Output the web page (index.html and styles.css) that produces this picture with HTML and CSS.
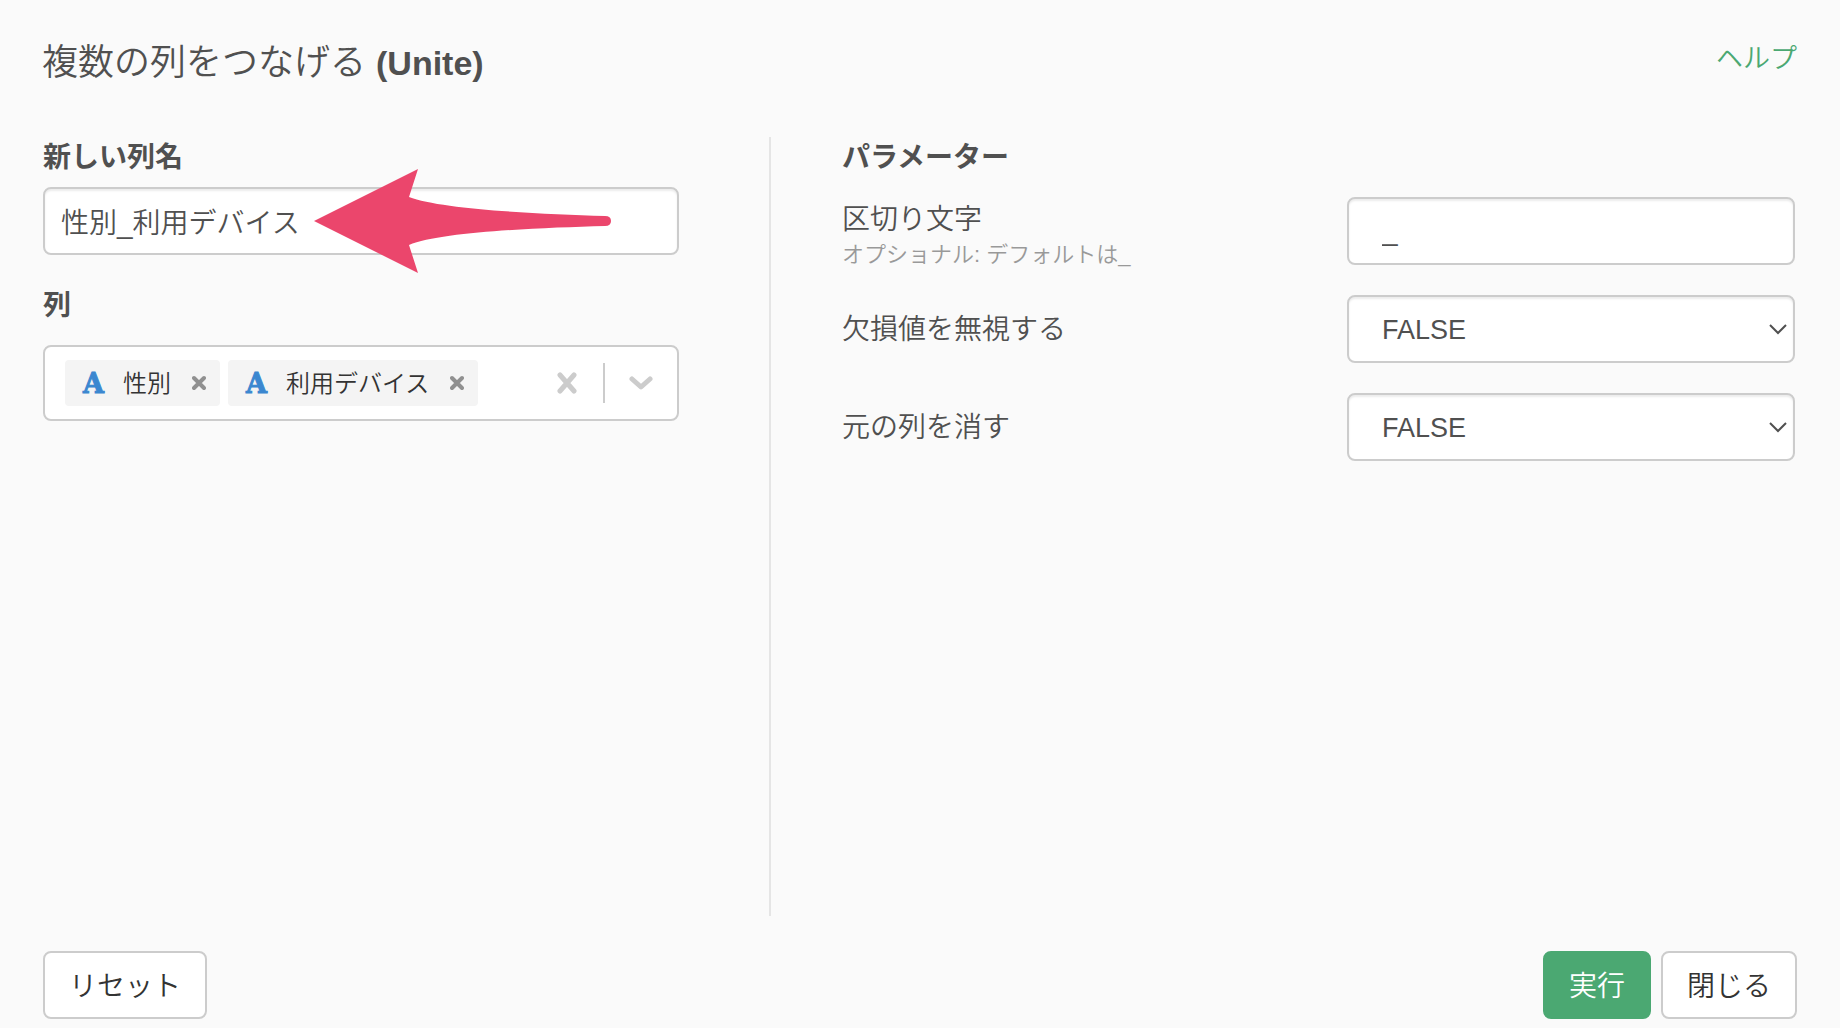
FILE: index.html
```html
<!DOCTYPE html>
<html lang="ja">
<head>
  <meta charset="UTF-8">
  <meta name="viewport" content="width=device-width, initial-scale=1.0">
  <title>複数の列をつなげる (Unite)</title>
  <link rel="stylesheet" href="styles.css">
</head>
<body>
  <form class="dialog">
    <header class="header">
      <h1 class="title">複数の列をつなげる <span class="title-en">(Unite)</span></h1>
      <a class="help" href="#help">ヘルプ</a>
    </header>
    <main class="content">
      <section class="columns-pane">
        <label class="heading" for="newName">新しい列名</label>
        <div class="name-field">
          <input class="control name-input" type="text" id="newName" value="性別_利用デバイス">
          <svg class="arrow" width="298" height="106" viewBox="0 0 298 106" aria-hidden="true">
            <path d="M0 53 L104 1 L95 29 C126 41 220 46 291 48 Q297 48 297 53 Q297 58 291 58 C220 60 126 64 95 77 L104 105 Z"/>
          </svg>
        </div>
        <h2 class="heading" id="columnsLabel">列</h2>
        <div class="multi-select" role="group" aria-labelledby="columnsLabel">
          <span class="tag">
            <span class="type-icon">A</span>
            <span class="tag-name">性別</span>
            <button class="icon-button tag-remove" type="button" aria-label="性別を外す">
              <svg width="14" height="16" viewBox="0 0 14 16"><path d="M2 3 L12 13 M12 3 L2 13"/></svg>
            </button>
          </span>
          <span class="tag">
            <span class="type-icon">A</span>
            <span class="tag-name">利用デバイス</span>
            <button class="icon-button tag-remove" type="button" aria-label="利用デバイスを外す">
              <svg width="14" height="16" viewBox="0 0 14 16"><path d="M2 3 L12 13 M12 3 L2 13"/></svg>
            </button>
          </span>
          <button class="icon-button clear" type="button" aria-label="すべて外す">
            <svg width="20" height="22" viewBox="0 0 20 22"><path d="M3 3 L17 19 M17 3 L3 19"/></svg>
          </button>
          <span class="separator"></span>
          <button class="icon-button open" type="button" aria-label="列を選ぶ">
            <svg width="24" height="14" viewBox="0 0 24 14"><path d="M3 3 L12 11 L21 3"/></svg>
          </button>
        </div>
      </section>
      <section class="params-pane">
        <h2 class="heading">パラメーター</h2>
        <div class="param">
          <label class="param-label" for="separator">区切り文字
            <small class="hint">オプショナル: デフォルトは_</small>
          </label>
          <div class="param-field">
            <input class="control" type="text" id="separator" value="_">
          </div>
        </div>
        <div class="param">
          <label class="param-label single" for="ignoreNa">欠損値を無視する</label>
          <div class="param-field">
            <select class="control select" id="ignoreNa">
              <option>FALSE</option>
              <option>TRUE</option>
            </select>
            <svg class="caret" width="18" height="11" viewBox="0 0 18 11"><path d="M1 1 L9 9 L17 1"/></svg>
          </div>
        </div>
        <div class="param">
          <label class="param-label single" for="removeCols">元の列を消す</label>
          <div class="param-field">
            <select class="control select" id="removeCols">
              <option>FALSE</option>
              <option>TRUE</option>
            </select>
            <svg class="caret" width="18" height="11" viewBox="0 0 18 11"><path d="M1 1 L9 9 L17 1"/></svg>
          </div>
        </div>
      </section>
    </main>
    <footer class="footer">
      <button class="button" type="reset">リセット</button>
      <div class="actions">
        <button class="button primary" type="button">実行</button>
        <button class="button" type="button">閉じる</button>
      </div>
    </footer>
  </form>
</body>
</html>
```

FILE: styles.css
```css
* {
  box-sizing: border-box;
}
body {
  margin: 0;
  background: #fafafa;
  color: #505050;
  font-family: "Liberation Sans", "Noto Sans CJK JP", sans-serif;
  font-size: 28px;
  font-weight: 350;
}
input, select, button {
  font: inherit;
  color: inherit;
}
.dialog {
  display: flex;
  flex-direction: column;
  min-height: 100vh;
  padding: 36px 43px 9px 42px;
}
.header {
  display: flex;
  justify-content: space-between;
  height: 101px;
}
.title {
  margin: 0;
  font-size: 36px;
  font-weight: 350;
  line-height: 53px;
}
.title-en {
  font-size: 34px;
  font-weight: bold;
}
.help {
  color: #4ba872;
  font-size: 27px;
  line-height: 46px;
  text-decoration: none;
}
.content {
  display: grid;
  grid-template-columns: 41.5% 1fr;
  flex: 1;
  padding-left: 1px;
}
.columns-pane {
  padding-right: 90px;
  border-right: 2px solid #e5e5e5;
}
.params-pane {
  padding: 0 2px 0 71px;
}
.heading {
  display: block;
  margin: 0;
  font-size: 28px;
  font-weight: bold;
  line-height: 42px;
}
.control {
  display: block;
  width: 100%;
  height: 68px;
  padding: 0 33px;
  border: 2px solid #ccc;
  border-radius: 8px;
  background: white;
  box-shadow: inset 0 2px 2px rgba(0,0,0,0.08);
  appearance: none;
}
.select {
  padding-top: 2px;
  font-size: 27px;
}
.name-field {
  position: relative;
  margin: 8px 0 30px;
}
.name-input {
  padding: 0 16px;
}
/* pointer drawn over the name box */
.arrow {
  position: absolute;
  left: 271px;
  top: -19px;
  fill: #eb466c;
  pointer-events: none;
}
.multi-select {
  display: flex;
  align-items: center;
  gap: 8px;
  height: 76px;
  margin-top: 18px;
  padding: 0 24px 0 20px;
  border: 2px solid #ccc;
  border-radius: 8px;
  background: white;
}
.tag {
  display: flex;
  align-items: center;
  height: 46px;
  padding: 0 14px 0 18px;
  border-radius: 4px;
  background: #f4f4f4;
  color: #333;
  font-size: 24px;
}
.tag-name {
  padding-bottom: 4px;
}
.type-icon {
  margin-right: 19px;
  color: #3b87d0;
  font-family: "DejaVu Serif", serif;
  font-size: 27px;
  font-weight: bold;
  -webkit-text-stroke: 1px #3b87d0;
}
.icon-button {
  display: flex;
  padding: 0;
  border: none;
  background: none;
}
.icon-button svg {
  fill: none;
  stroke: #ccc;
  stroke-width: 5;
  stroke-linecap: round;
  stroke-linejoin: round;
}
.tag-remove {
  margin-left: 21px;
}
.tag-remove svg {
  stroke: #909090;
  stroke-width: 4;
}
.clear {
  margin-left: auto;
}
.separator {
  width: 2px;
  height: 40px;
  margin: 0 16px 0 18px;
  background: #ccc;
}
.param {
  display: flex;
  align-items: flex-start;
  height: 68px;
  margin-bottom: 30px;
}
.params-pane .heading {
  margin-bottom: 18px;
}
.param-label {
  flex: 1;
  padding-top: 6px;
  line-height: 34px;
}
.param-label.single {
  padding: 0;
  line-height: 70px;
}
.hint {
  display: block;
  color: #999;
  font-size: 22px;
  line-height: 35px;
}
.param-field {
  position: relative;
  width: 47%;
}
.caret {
  position: absolute;
  right: 8px;
  top: 29px;
  fill: none;
  stroke: #505050;
  stroke-width: 2;
  pointer-events: none;
}
.footer {
  display: flex;
  justify-content: space-between;
  margin-top: 35px;
  padding-left: 1px;
}
.actions {
  display: flex;
  gap: 10px;
}
.button {
  height: 68px;
  padding: 0 24px 2px;
  border: 2px solid #ccc;
  border-radius: 8px;
  background: white;
  color: #333;
}
.primary {
  border-color: #4ba872;
  background: #4ba872;
  color: white;
}
```
